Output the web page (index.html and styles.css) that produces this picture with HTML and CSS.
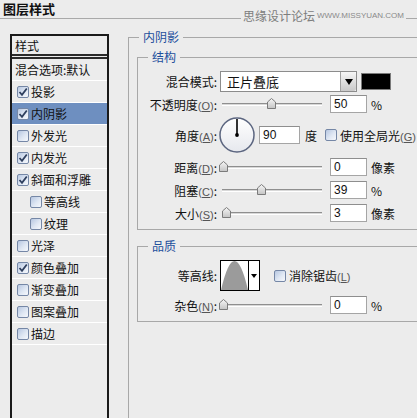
FILE: index.html
```html
<!DOCTYPE html>
<html lang="zh-CN">
<head>
<meta charset="utf-8">
<title>图层样式</title>
<link rel="stylesheet" href="styles.css">
</head>
<body>
<header class="titlebar">
  <h1 class="title">图层样式</h1>
  <span class="watermark">思缘设计论坛 <span class="wm-url">WWW.MISSYUAN.COM</span></span>
</header>
<div class="main">
  <aside class="styles-list">
    <div class="list-head">样式</div>
    <div class="list-row plain">混合选项:默认</div>
    <div class="list-row"><span class="cb"><svg class="tick" viewBox="0 0 10 10"><path d="M1.5 5 L4 7.8 L8.8 1.5"/></svg></span>投影</div>
    <div class="list-row selected"><span class="cb"><svg class="tick" viewBox="0 0 10 10"><path d="M1.5 5 L4 7.8 L8.8 1.5"/></svg></span>内阴影</div>
    <div class="list-row"><span class="cb"></span>外发光</div>
    <div class="list-row"><span class="cb"><svg class="tick" viewBox="0 0 10 10"><path d="M1.5 5 L4 7.8 L8.8 1.5"/></svg></span>内发光</div>
    <div class="list-row"><span class="cb"><svg class="tick" viewBox="0 0 10 10"><path d="M1.5 5 L4 7.8 L8.8 1.5"/></svg></span>斜面和浮雕</div>
    <div class="list-row indent"><span class="cb"></span>等高线</div>
    <div class="list-row indent"><span class="cb"></span>纹理</div>
    <div class="list-row"><span class="cb"></span>光泽</div>
    <div class="list-row"><span class="cb"><svg class="tick" viewBox="0 0 10 10"><path d="M1.5 5 L4 7.8 L8.8 1.5"/></svg></span>颜色叠加</div>
    <div class="list-row"><span class="cb"></span>渐变叠加</div>
    <div class="list-row"><span class="cb"></span>图案叠加</div>
    <div class="list-row"><span class="cb"></span>描边</div>
  </aside>

  <section class="content">
    <fieldset class="group outer">
      <legend>内阴影</legend>

      <fieldset class="group inner struct">
        <legend>结构</legend>

        <div class="frow r-mode">
          <span class="flabel">混合模式:</span>
          <div class="select">
            <span class="select-text">正片叠底</span>
            <span class="select-btn"><svg width="8" height="6" viewBox="0 0 8 6"><path d="M0 0 H8 L4 6 Z" fill="#000"/></svg></span>
          </div>
          <span class="swatch"></span>
        </div>

        <div class="frow r-opac">
          <span class="flabel">不透明度<span class="key">(<u>O</u>)</span>:</span>
          <div class="slider"><div class="track"></div><svg class="thumb" style="left:45px" width="9" height="11" viewBox="0 0 9 11"><defs><linearGradient id="tg1" x1="0" y1="0" x2="0" y2="1"><stop offset="0" stop-color="#f6f6f6"/><stop offset="1" stop-color="#c4c4c4"/></linearGradient></defs><path d="M0.5 4 L4.5 0.5 L8.5 4 V10.5 H0.5 Z" fill="url(#tg1)" stroke="#7b7b7b"/></svg></div>
          <span class="num">50</span>
          <span class="unit">%</span>
        </div>

        <div class="frow r-angle">
          <span class="flabel">角度<span class="key">(<u>A</u>)</span>:</span>
          <svg class="dial" width="36" height="36" viewBox="0 0 36 36">
            <defs><linearGradient id="dg" x1="0" y1="0" x2="0" y2="1"><stop offset="0" stop-color="#ffffff"/><stop offset="1" stop-color="#e6e8ee"/></linearGradient></defs>
            <circle cx="18" cy="18" r="17" fill="url(#dg)" stroke="#5c6680" stroke-width="1.5"/>
            <line x1="18" y1="18" x2="18" y2="2" stroke="#000" stroke-width="1.6"/>
            <circle cx="18" cy="18" r="1.9" fill="#000"/>
          </svg>
          <span class="num wide">90</span>
          <span class="unit deg">度</span>
          <span class="cb gap-cb"></span>
          <span class="cb-text">使用全局光<span class="key">(<u>G</u>)</span></span>
        </div>

        <div class="frow r-dist">
          <span class="flabel">距离<span class="key">(<u>D</u>)</span>:</span>
          <div class="slider"><div class="track"></div><svg class="thumb" style="left:-3px" width="9" height="11" viewBox="0 0 9 11"><defs><linearGradient id="tg2" x1="0" y1="0" x2="0" y2="1"><stop offset="0" stop-color="#f6f6f6"/><stop offset="1" stop-color="#c4c4c4"/></linearGradient></defs><path d="M0.5 4 L4.5 0.5 L8.5 4 V10.5 H0.5 Z" fill="url(#tg2)" stroke="#7b7b7b"/></svg></div>
          <span class="num">0</span>
          <span class="unit">像素</span>
        </div>

        <div class="frow">
          <span class="flabel">阻塞<span class="key">(<u>C</u>)</span>:</span>
          <div class="slider"><div class="track"></div><svg class="thumb" style="left:35px" width="9" height="11" viewBox="0 0 9 11"><defs><linearGradient id="tg3" x1="0" y1="0" x2="0" y2="1"><stop offset="0" stop-color="#f6f6f6"/><stop offset="1" stop-color="#c4c4c4"/></linearGradient></defs><path d="M0.5 4 L4.5 0.5 L8.5 4 V10.5 H0.5 Z" fill="url(#tg3)" stroke="#7b7b7b"/></svg></div>
          <span class="num">39</span>
          <span class="unit">%</span>
        </div>

        <div class="frow">
          <span class="flabel">大小<span class="key">(<u>S</u>)</span>:</span>
          <div class="slider"><div class="track"></div><svg class="thumb" style="left:0px" width="9" height="11" viewBox="0 0 9 11"><defs><linearGradient id="tg4" x1="0" y1="0" x2="0" y2="1"><stop offset="0" stop-color="#f6f6f6"/><stop offset="1" stop-color="#c4c4c4"/></linearGradient></defs><path d="M0.5 4 L4.5 0.5 L8.5 4 V10.5 H0.5 Z" fill="url(#tg4)" stroke="#7b7b7b"/></svg></div>
          <span class="num">3</span>
          <span class="unit">像素</span>
        </div>
      </fieldset>

      <fieldset class="group inner quality">
        <legend>品质</legend>

        <div class="frow r-contour">
          <span class="flabel">等高线:</span>
          <div class="contour">
            <svg class="contour-preview" width="27" height="29" viewBox="0 0 27 29"><path d="M0 29 Q13.5 -29 27 29 Z" fill="#9b9b9b"/></svg>
            <span class="contour-btn"><svg width="6" height="4" viewBox="0 0 6 4"><path d="M0 0 H6 L3 4 Z" fill="#000"/></svg></span>
          </div>
          <span class="cb aa-cb"></span>
          <span class="cb-text">消除锯齿<span class="key">(<u>L</u>)</span></span>
        </div>

        <div class="frow r-noise">
          <span class="flabel">杂色<span class="key">(<u>N</u>)</span>:</span>
          <div class="slider"><div class="track"></div><svg class="thumb" style="left:-3px" width="9" height="11" viewBox="0 0 9 11"><defs><linearGradient id="tg5" x1="0" y1="0" x2="0" y2="1"><stop offset="0" stop-color="#f6f6f6"/><stop offset="1" stop-color="#c4c4c4"/></linearGradient></defs><path d="M0.5 4 L4.5 0.5 L8.5 4 V10.5 H0.5 Z" fill="url(#tg5)" stroke="#7b7b7b"/></svg></div>
          <span class="num">0</span>
          <span class="unit">%</span>
        </div>
      </fieldset>
    </fieldset>
  </section>
</div>
</body>
</html>
```

FILE: styles.css
```css
* {
  box-sizing: border-box;
}

html,
body {
  margin: 0;
  padding: 0;
  overflow: hidden;
}

body {
  width: 417px;
  height: 418px;
  background: #ececec;
  font-family: "Noto Sans CJK SC", "Liberation Sans", sans-serif;
  font-size: 12px;
  color: #111;
}

/* ---------- title bar ---------- */
.titlebar {
  position: relative;
  height: 19px;
  border-bottom: 1px solid #a9a9a9;
  display: flex;
  align-items: center;
}

.title {
  margin: 0;
  padding-left: 3px;
  font-size: 13px;
  font-weight: bold;
  line-height: 18px;
  color: #111;
}

.watermark {
  position: absolute;
  right: 11px;
  top: 9px;
  padding: 0 2px;
  background: #ececec;
  color: #7d7d7d;
  font-size: 12px;
  line-height: 14px;
  display: flex;
  align-items: center;
  gap: 2px;
  white-space: nowrap;
}

.wm-url {
  font-family: "Liberation Sans", sans-serif;
  font-size: 8px;
  color: #8a8a8a;
}

/* ---------- layout ---------- */
.main {
  display: flex;
  align-items: flex-start;
}

/* ---------- left list ---------- */
.styles-list {
  flex: none;
  margin: 15px 0 0 10px;
  width: 99px;
  height: 400px;
  border: 2px solid #1a1a1a;
  border-bottom: none;
  background: #ececec;
}

.list-head {
  height: 23px;
  padding-left: 3px;
  display: flex;
  align-items: center;
  border-bottom: 5px double #2a2a2a;
}

.list-row {
  height: 22px;
  padding-left: 5px;
  display: flex;
  align-items: center;
  border-bottom: 1px solid #ffffff;
  white-space: nowrap;
}

.list-row.plain {
  padding-left: 3px;
}

.list-row.indent {
  padding-left: 18px;
}

.list-row.selected {
  background: #6e8fc0;
}

/* checkbox */
.cb {
  flex: none;
  width: 12px;
  height: 12px;
  margin-right: 2px;
  border: 1px solid #7587a6;
  border-radius: 2px;
  background: linear-gradient(135deg, #b7c7e1 0%, #dfe7f3 55%, #f6f8fc 100%);
  display: flex;
  align-items: center;
  justify-content: center;
}

.tick {
  width: 10px;
  height: 10px;
  fill: none;
  stroke: #2f3f5e;
  stroke-width: 1.8;
}

/* ---------- right panel ---------- */
.content {
  margin: 11px 0 0 19px;
  flex: none;
}

.group {
  margin: 0;
  padding: 0;
  min-width: 0;
  border: 1px solid #a8a8a8;
}

.group > legend {
  margin-left: 10px;
  padding: 0 4px;
  font-size: 12px;
  line-height: 14px;
  color: #1d4f9c;
}

.group.outer {
  width: 320px;
  height: 400px;
  border-bottom: none;
  border-right: none;
}

.group.inner {
  margin: 6px 0 0 8px;
  width: 300px;
  border-right: none;
}

.group.struct {
  padding: 7px 0 6px;
}

.group.quality {
  margin-top: 9px;
  padding: 7px 0 6px;
}

.frow {
  display: flex;
  align-items: center;
  height: 20px;
  margin-top: 3px;
  white-space: nowrap;
}

.r-mode {
  height: 21px;
  margin-top: 0;
}

.r-opac {
  margin-top: 2px;
}

.r-angle {
  height: 36px;
}

.r-dist {
  margin-top: 4px;
}

.r-contour {
  height: 31px;
  margin-top: 0;
}

.r-noise {
  margin-top: 4px;
}

.flabel {
  flex: none;
  width: 79px;
  text-align: right;
}

.key {
  font-family: "Liberation Sans", sans-serif;
  font-size: 11px;
  color: #555;
}

/* select */
.select {
  flex: none;
  margin-left: 3px;
  width: 137px;
  height: 21px;
  border: 1px solid #8c8c8c;
  background: #fff;
  display: flex;
  align-items: center;
}

.select-text {
  flex: 1;
  padding-left: 6px;
  font-size: 13px;
}

.select-btn {
  width: 16px;
  height: 100%;
  border-left: 1px solid #a0a0a0;
  border-radius: 0 2px 2px 0;
  background: linear-gradient(#f5f5f5, #c9c9c9);
  display: flex;
  align-items: center;
  justify-content: center;
}

.swatch {
  flex: none;
  margin-left: 4px;
  width: 30px;
  height: 17px;
  background: #000;
  border: 1px solid #7a7a7a;
}

/* slider */
.slider {
  position: relative;
  flex: none;
  margin-left: 5px;
  width: 100px;
  height: 20px;
}

.track {
  margin-top: 9px;
  height: 3px;
  border-top: 1px solid #8f8f8f;
  border-bottom: 1px solid #ffffff;
  background: #d8d8d8;
}

.thumb {
  position: absolute;
  top: 4px;
}

/* numeric fields */
.num {
  flex: none;
  margin-left: 8px;
  width: 37px;
  height: 18px;
  border: 1px solid #a5a5a5;
  border-top-color: #8e8e8e;
  background: #fff;
  padding-left: 3px;
  font-family: "Liberation Sans", sans-serif;
  font-size: 12px;
  line-height: 16px;
}

.num.wide {
  margin-left: 4px;
  width: 41px;
}

.unit {
  margin-left: 4px;
  font-family: "Noto Sans CJK SC", "Liberation Sans", sans-serif;
}

.unit.deg {
  margin-left: 5px;
}

.dial {
  flex: none;
  margin-left: 2px;
}

.gap-cb {
  margin-left: 8px;
  margin-right: 3px;
}

.aa-cb {
  margin-left: 14px;
  margin-right: 3px;
}

.cb-text {
  white-space: nowrap;
}

/* contour picker */
.contour {
  flex: none;
  margin-left: 3px;
  width: 40px;
  height: 31px;
  border: 1px solid #000;
  background: #fff;
  display: flex;
}

.contour-preview {
  display: block;
}

.contour-btn {
  flex: 1;
  border-left: 1px solid #000;
  display: flex;
  align-items: center;
  justify-content: center;
}
```
